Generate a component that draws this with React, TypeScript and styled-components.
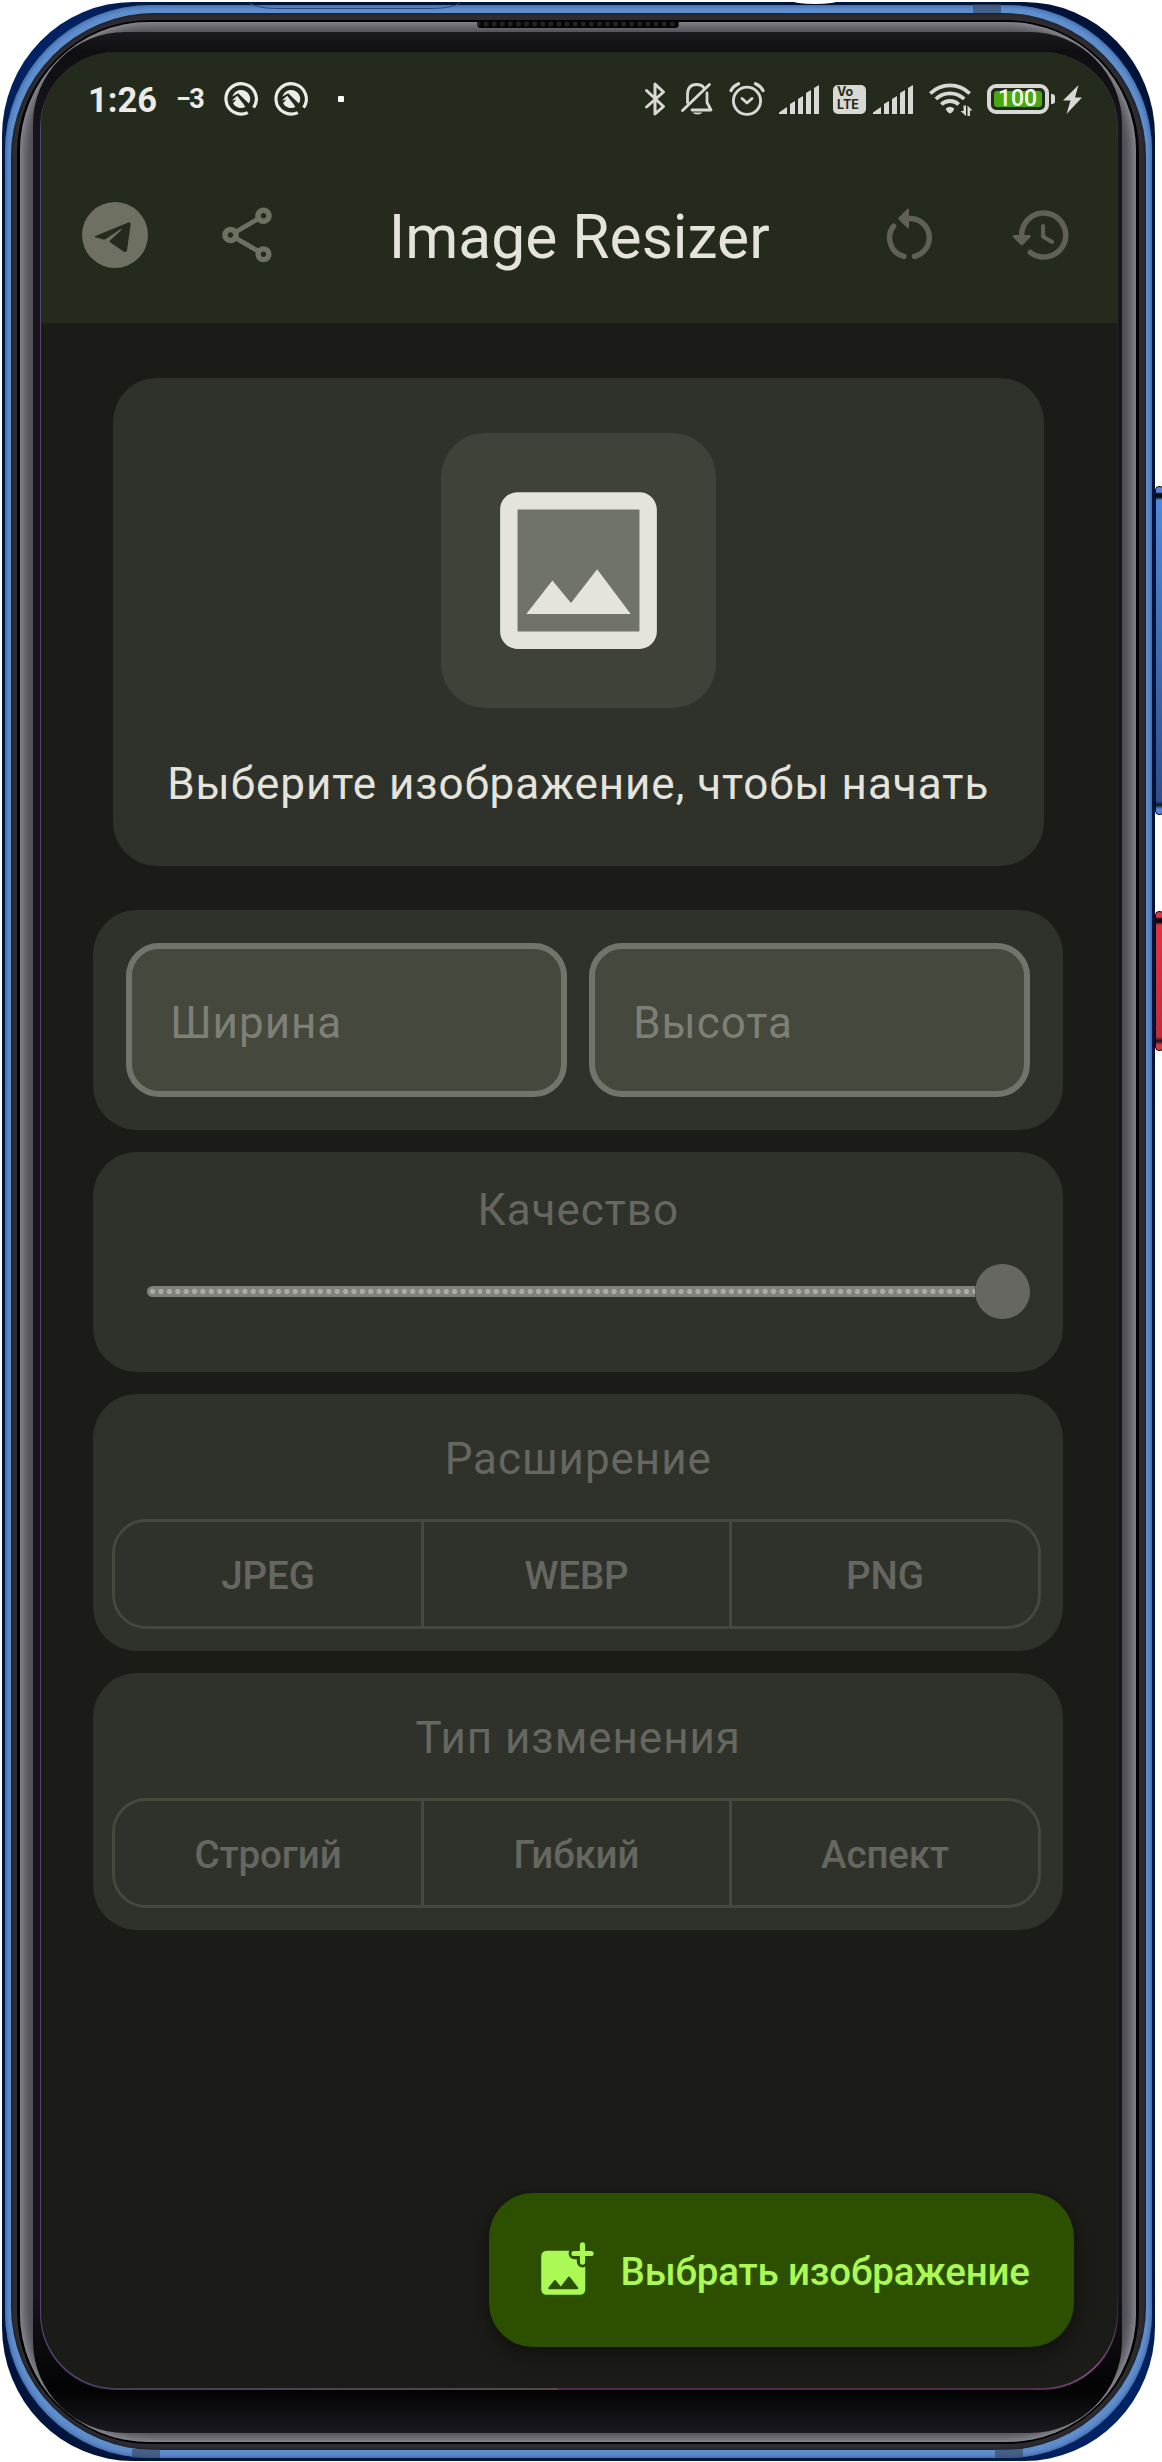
import React from "react";
import styled, { createGlobalStyle, css } from "styled-components";

const GlobalStyle = createGlobalStyle`
  html, body { margin: 0; padding: 0; background: #fff; }
  * { box-sizing: border-box; }
  body { font-family: Roboto, "Noto Sans", sans-serif; -webkit-font-smoothing: antialiased; }
`;

/* ---------- device frame ---------- */

const Stage = styled.div`
  position: relative;
  width: 1162px;
  height: 2462px;
  padding: 2px 7px 1px 2px;
  overflow: hidden;
`;

const Shell = styled.div`
  height: 100%;
  padding: 3px;
  border-radius: 131px / 134px;
  background: linear-gradient(135deg, #001235, #01256b 2%, #001235 5%, #00153f 95%, #01256b 98%, #001235);
`;

const BlueRim = styled.div`
  height: 100%;
  padding: 8px 6px 8.5px 6px;
  border-radius: 146px;
  background: #5f8ecd;
  box-shadow: inset 0 0 4px 1px #3a63a3;
`;

const DarkRim = styled.div`
  height: 100%;
  padding: 7px 7px 6px 6px;
  border-radius: 144px;
  background: #2d2c33;
  box-shadow: inset 0 0 3px #121216;
`;

const BlackLine = styled.div`
  height: 100%;
  padding: 2px 3px 1.5px 3px;
  border-radius: 133px;
  background: #020203;
`;

const SilverRim = styled.div`
  height: 100%;
  padding: 10px 14px 9px 13px;
  border-radius: 129px;
  background: #4f4e56;
  box-shadow: inset 0 0 11px 3px #98999d;
`;

const Glass = styled.div`
  height: 100%;
  padding: 20px 4.5px 43.5px 6.5px;
  border-radius: 92px;
  background: linear-gradient(#1b1a1f, #0f0f12 20px, #16151a 100px, #16151a 2260px, #030304 2358px, #1b1a20 100%);
`;

const ScreenEdge = styled.div`
  height: 100%;
  padding: 0 1px 1.5px 1.5px;
  border-radius: 76px;
  background:
    radial-gradient(circle at 1052px 26px, #2f7680, transparent 70px),
    radial-gradient(circle at 1052px 2310px, #8a4a84, transparent 70px),
    linear-gradient(90deg, #5a4276 0, #5a4276 4px, #4a3a5a 5%, #564a44 48%, #53284f 48.1%, #4c2a4a 98%, #26292c 99.6%);
`;

const Screen = styled.div`
  position: relative;
  height: 100%;
  border-radius: 75px;
  overflow: hidden;
  background: #1b1c17;
  display: flex;
  flex-direction: column;
`;

const Speaker = styled.div`
  position: absolute;
  left: 477px;
  top: 19.5px;
  width: 202px;
  height: 8px;
  border-radius: 4px;
  background: radial-gradient(circle, #222226 2.2px, transparent 2.8px) 5px 0 / 8.1px 8px, #050506;
`;

const Notch = styled.div`
  position: absolute;
  left: 792px;
  top: -3px;
  width: 46px;
  height: 7px;
  border-radius: 50%;
  background: #fff;
`;

const Antenna = styled.div<{ $x: number; $y: number }>`
  position: absolute;
  left: ${(p) => p.$x}px;
  top: ${(p) => p.$y}px;
  width: 28px;
  height: 9px;
  background: rgba(50, 66, 92, 0.6);
`;

const RimSeam = styled.svg`
  position: absolute;
  left: 249px;
  top: 2px;
`;

const SideKey = styled.div<{ $y: number; $h: number; $from: string; $to: string }>`
  position: absolute;
  left: 1155px;
  top: ${(p) => p.$y}px;
  width: 9px;
  height: ${(p) => p.$h}px;
  border: 1.5px solid #05070d;
  border-radius: 4px;
  background: linear-gradient(
    ${(p) => p.$from} 5px, #050608 7px, #050608 10px, ${(p) => p.$from} 13px,
    ${(p) => p.$to} calc(100% - 13px), #101620 calc(100% - 9px), ${(p) => p.$from} calc(100% - 5px)
  );
`;

/* ---------- top bars ---------- */

const TopArea = styled.header`
  height: 271px;
  flex: none;
  background: #252b1c;
  color: #e4e3dc;
`;

const StatusBar = styled.div`
  display: flex;
  align-items: center;
  height: 94px;
  padding-left: 47px;
`;

const Clock = styled.span`
  width: 71px;
  padding-top: 1px;
  font-size: 34.5px;
  line-height: 40px;
  font-weight: 700;
  color: #ebebe8;
`;

const Temp = styled.span`
  margin: 0 0 0 17px;
  width: 36px;
  font-size: 27px;
  line-height: 40px;
  font-weight: 700;
  letter-spacing: -1.8px;
  color: #ebebe8;
  white-space: nowrap;
`;

const Glyph = styled.svg<{ $ml?: number }>`
  flex: none;
  display: block;
  overflow: visible;
  margin-left: ${(p) => p.$ml ?? 0}px;
`;

const Dot = styled.span`
  width: 6px;
  height: 6px;
  margin-left: 30px;
  border-radius: 1px;
  background: #fff;
`;

const VoLte = styled.span`
  display: flex;
  flex-direction: column;
  justify-content: center;
  width: 33px;
  height: 29px;
  margin-left: 14px;
  padding-left: 4.5px;
  border-radius: 5px;
  background: #d8d9d5;
  color: #262b1d;
  font: 700 12.5px/12.8px Inter, sans-serif;
`;

const Battery = styled.span`
  display: flex;
  width: 62px;
  height: 30px;
  margin-left: 15px;
  padding: 3px;
  border: 4px solid #d8d9d5;
  border-radius: 9px;
`;

const BatteryFill = styled.span`
  flex: 1;
  display: flex;
  align-items: center;
  justify-content: center;
  border-radius: 3px;
  background: #4ba614;
  color: #f3fbee;
  font: 500 23px/16px Roboto, sans-serif;
`;

const BatteryTip = styled.span`
  width: 4px;
  height: 10px;
  margin-left: 2px;
  border-radius: 0 3px 3px 0;
  background: #d8d9d5;
`;

const AppBar = styled.div`
  display: flex;
  align-items: center;
  height: 177px;
  padding: 0 10px 0 8px;
`;

const IconButton = styled.span<{ $color: string }>`
  display: flex;
  align-items: center;
  justify-content: center;
  width: 132px;
  height: 132px;
  color: ${(p) => p.$color};
`;

const Title = styled.h1`
  flex: 1;
  margin: 0;
  padding: 5px 0 0 3px;
  text-align: center;
  font-size: 60.5px;
  line-height: 77px;
  font-weight: 400;
  white-space: nowrap;
`;

/* ---------- content ---------- */

const Content = styled.main`
  display: flex;
  flex-direction: column;
  align-items: center;
  gap: 22px;
  padding: 55px 54px 0 53px;
`;

const PickCard = styled.section`
  display: flex;
  flex-direction: column;
  align-items: center;
  width: 931px;
  height: 488px;
  margin-bottom: 22px;
  padding-top: 55px;
  border-radius: 44px;
  background: #2f322b;
`;

const PickIcon = styled.div`
  display: flex;
  align-items: center;
  justify-content: center;
  width: 275px;
  height: 275px;
  border-radius: 44px;
  background: #3f4238;
`;

const bodyText = css`
  font-size: 44px;
  line-height: 66px;
  letter-spacing: 0.96px;
  white-space: nowrap;
`;

const Hint = styled.p`
  ${bodyText};
  margin: 43px 0 0;
  color: #e4e3dc;
`;

const Card = styled.section<{ $h: number }>`
  display: flex;
  flex-direction: column;
  width: 970px;
  height: ${(p) => p.$h}px;
  border-radius: 44px;
  background: #2f322b;
`;

const FieldRow = styled.div`
  display: flex;
  gap: 22px;
  padding: 33px;
`;

const Field = styled.div`
  ${bodyText};
  flex: 1;
  display: flex;
  align-items: center;
  height: 154px;
  padding: 5px 0 0 38px;
  border: 6px solid #71746a;
  border-radius: 33px;
  background: #45483d;
  color: #7e8076;
`;

const CardTitle = styled.h2<{ $top: number }>`
  ${bodyText};
  margin: ${(p) => p.$top}px 0 0;
  text-align: center;
  font-weight: 400;
  color: #656760;
`;

const Slider = styled.div`
  display: flex;
  align-items: center;
  height: 55px;
  margin: 21px 33px 0 54px;
`;

const Track = styled.div`
  flex: 1;
  height: 11px;
  border-radius: 5.5px 0 0 5.5px;
  background: radial-gradient(circle, #abada5 2.3px, transparent 3px) 1.4px 0 / 8.406px 11px, #80827a;
`;

const Thumb = styled.div`
  width: 55px;
  height: 55px;
  border-radius: 50%;
  background: #666760;
`;

const Segments = styled.div`
  display: flex;
  width: 928.5px;
  height: 110px;
  margin: 27px 0 0 19px;
  border: 3px solid #45483d;
  border-radius: 34px;
`;

const Segment = styled.div`
  flex: 1;
  display: flex;
  align-items: center;
  justify-content: center;
  padding-top: 3px;
  font-size: 38.5px;
  line-height: 55px;
  font-weight: 500;
  letter-spacing: -0.1px;
  color: #656760;
  & + & {
    border-left: 3px solid #45483d;
  }
`;

const Fab = styled.button`
  display: flex;
  align-items: center;
  gap: 22px;
  align-self: flex-end;
  width: 585px;
  height: 154px;
  margin: auto 43px 41.5px 0;
  padding: 0 0 0 44px;
  border: 0;
  border-radius: 44px;
  background: #2d5000;
  color: #aaf954;
  box-shadow: 0 8px 22px rgba(0, 0, 0, 0.3), 0 2px 6px rgba(0, 0, 0, 0.2);
  font: 500 38.5px/55px Roboto, sans-serif;
  letter-spacing: -0.15px;
  white-space: nowrap;
`;

const FabLabel = styled.span`
  padding-top: 4px;
`;

/* ---------- icons ---------- */

const STATUS = "#d8d9d5";

const NoticeIcon = ({ ml }: { ml: number }) => (
  <Glyph $ml={ml} width="34" height="34" viewBox="0 0 34 34">
    <path d="M24.5 30.2A15.2 15.2 0 1 1 30 25" transform="rotate(3 17 17)" fill="none" stroke="#ebebe8" strokeWidth="3.2" />
    <path d="M8.4 14.6C9.6 10.5 13 7.9 17 7.9a9.1 9.1 0 0 1 7.9 13.7L14.2 11.2z" fill="#ebebe8" />
    <path d="M8 18.4l5.2-4.6 3.9 5.2 4.6 5.8A9.1 9.1 0 0 1 9 21.2l3.4-3.6z" fill="#ebebe8" />
    <path d="M21 22l7 7" stroke="#252b1c" strokeWidth="3" />
  </Glyph>
);

const Bluetooth = () => (
  <Glyph $ml={301} width="22" height="34" viewBox="0 0 22 34">
    <path d="M1.5 8.5l17 16L10 32V2l8.500 8L1.500 25" fill="none" stroke={STATUS} strokeWidth="3" strokeLinejoin="round" strokeLinecap="round" />
  </Glyph>
);

const BellOff = () => (
  <Glyph $ml={14} width="32" height="34" viewBox="0 0 32 34">
    <g fill="none" stroke={STATUS} strokeWidth="2.8" strokeLinecap="round">
      <path d="M6.500 20.500V13C6.500 6 10 2.500 15.500 2.500c3.500 0 6 1 7.500 3.500" />
      <path d="M26 11v9.500l4 7.500H11" strokeLinejoin="round" />
      <path d="M1.500 28.500L28.500 2.500" />
    </g>
    <path d="M11.500 30.500h10a5.500 3.600 0 0 1-10 0z" fill={STATUS} />
  </Glyph>
);

const Alarm = () => (
  <Glyph $ml={16} width="36" height="34" viewBox="0 0 36 34">
    <g fill="none" stroke={STATUS} strokeWidth="2.800" strokeLinecap="round" strokeLinejoin="round">
      <circle cx="18" cy="18.800" r="13.600" />
      <path d="M13 16.500l5 4.500 5-4.500" />
      <path d="M2 8.500c1.500-3 4-5.300 7.500-6.800M34 8.500c-1.500-3-4-5.300-7.500-6.800" strokeWidth="3.200" />
    </g>
  </Glyph>
);

const Signal = ({ ml }: { ml: number }) => (
  <Glyph $ml={ml} width="40" height="29" viewBox="0 0 40 29">
    <g fill={STATUS}>
      <path d="M0 29v-1.500L8 22v7z" />
      <path d="M11 29V19l5-3v13z" />
      <path d="M19 29V14l5-3v18z" />
      <path d="M27 29V8l5-3v24z" />
      <path d="M35 29V3l5-3v29z" />
    </g>
  </Glyph>
);

const Wifi = () => (
  <Glyph $ml={16} width="43" height="34" viewBox="0 0 43 34">
    <g fill="none" stroke={STATUS} strokeWidth="3.800">
      <path d="M1.300 11.500a28 28 0 0 1 39.400 0" />
      <path d="M6.800 17a20.500 20.500 0 0 1 28.400 0" />
      <path d="M12.300 22.500a12.500 12.500 0 0 1 17.400 0" />
    </g>
    <path d="M16.800 26.500a6.500 6.500 0 0 1 8.400 0c0 2-2.500 4.500-4.200 5-1.700-.5-4.200-3-4.200-5z" fill={STATUS} />
    <path d="M37 23.500V34l-5.500-5H34.500v-5.500zM38.500 34V23.500l5 5H41V34z" fill={STATUS} />
  </Glyph>
);

const Bolt = () => (
  <Glyph $ml={8} width="19" height="29" viewBox="0 0 19 29">
    <path d="M15.500 0L0 15.500h7.500L3.500 29 19 12.500h-7z" fill={STATUS} />
  </Glyph>
);

const Telegram = () => (
  <Glyph width="66" height="66" viewBox="0 0 24 24">
    <path
      fill="currentColor"
      fillRule="evenodd"
      d="M12 0a12 12 0 1 1 0 24a12 12 0 1 1 0-24zM4.900 12.400L16.600 7.500Q17.800 7.100 17.700 8.300L16.400 17.400Q16.200 18.600 15.100 18L10.200 14.600Q9.900 14.300 10.200 14L14.300 10.200Q14.500 9.700 13.900 9.900L8.900 13.300Q8.400 13.700 7.800 13.600L5 12.900Q4.300 12.700 4.900 12.400z"
    />
  </Glyph>
);

const Share = () => (
  <Glyph width="66" height="66" viewBox="0 0 24 24">
    <path
      fill="currentColor"
      d="M18 16.080c-.76 0-1.440.3-1.960.77L8.910 12.700c.05-.23.09-.46.09-.7s-.04-.47-.09-.7l7.050-4.110c.54.5 1.250.81 2.040.81 1.660 0 3-1.340 3-3s-1.340-3-3-3-3 1.340-3 3c0 .24.04.47.09.7L8.040 9.810C7.500 9.310 6.790 9 6 9c-1.660 0-3 1.340-3 3s1.340 3 3 3c.79 0 1.500-.31 2.040-.81l7.120 4.160c-.05.21-.08.43-.08.65 0 1.610 1.310 2.920 2.920 2.920s2.920-1.310 2.920-2.920-1.310-2.920-2.920-2.920zM18 4c.55 0 1 .45 1 1s-.45 1-1 1-1-.45-1-1 .45-1 1-1zM6 13c-.55 0-1-.45-1-1s.45-1 1-1 1 .45 1 1-.45 1-1 1zm12 7.020c-.55 0-1-.45-1-1s.45-1 1-1 1 .45 1 1-.45 1-1 1z"
    />
  </Glyph>
);

const Restart = () => (
  <Glyph width="66" height="66" viewBox="0 0 24 24">
    <g fill="none" stroke="currentColor" strokeWidth="2" strokeLinecap="round">
      <path d="M6.400 8.800A7 7 0 0 0 10.100 19.800" />
      <path d="M12 6A7 7 0 0 1 14 19.800" />
    </g>
    <path d="M8.250 5.650L11.300 2.600Q12 2.100 12 2.900V9.100Q12 9.900 11.300 9.400L8.250 6.350Q7.900 6 8.250 5.650z" fill="currentColor" />
  </Glyph>
);

const History = () => (
  <Glyph width="66" height="66" viewBox="0 0 24 24">
    <path
      fill="currentColor"
      d="M13.260 3C8.170 2.860 4 6.950 4 12H2.210c-.45 0-.67.54-.35.85l2.790 2.800c.2.2.51.2.71 0l2.790-2.800c.31-.31.09-.85-.36-.85H6c0-3.900 3.180-7.050 7.100-7 3.720.05 6.850 3.180 6.900 6.900.05 3.910-3.100 7.100-7 7.100-1.610 0-3.100-.55-4.280-1.480-.4-.31-.96-.28-1.320.08-.42.42-.39 1.130.08 1.490C9 20.290 10.910 21 13 21c5.050 0 9.140-4.170 9-9.260-.13-4.690-4.050-8.610-8.740-8.740zm-.51 5c-.41 0-.75.34-.75.75v3.680c0 .35.19.68.49.86l3.120 1.850c.36.21.82.09 1.030-.26.21-.36.09-.82-.26-1.030l-2.880-1.710v-3.400c0-.4-.34-.74-.75-.74z"
    />
  </Glyph>
);

const ImageIcon = () => (
  <Glyph width="209" height="209" viewBox="0 0 24 24">
    <rect x="4" y="4" width="16" height="16" fill="#70736a" />
    <path
      fill="#e4e3dc"
      d="M19 5v14H5V5h14m0-2H5c-1.100 0-2 .9-2 2v14c0 1.100.9 2 2 2h14c1.100 0 2-.9 2-2V5c0-1.100-.9-2-2-2zm-4.860 8.860l-3 3.870L9 13.140 6 17h12l-3.860-5.140z"
    />
  </Glyph>
);

const AddPhoto = () => (
  <Glyph width="66" height="66" viewBox="0 0 24 24">
    <rect x="3" y="5" width="16" height="16" rx="1.900" fill="currentColor" />
    <path d="M18 3v6M15 6h6" stroke="#2d5000" strokeWidth="4.100" strokeLinecap="round" />
    <path d="M18 2.900v6.200M14.900 6h6.200" stroke="currentColor" strokeWidth="1.900" strokeLinecap="round" />
    <path d="M5.700 18.300L7.600 15.900Q8 15.400 8.400 15.900L10.100 18L12.700 14.600Q13.100 14.200 13.500 14.600L16.300 18.300Q16.700 18.950 16 19H6Q5.300 18.950 5.700 18.300z" fill="#2d5000" />
  </Glyph>
);

const groups = [
  { title: "Расширение", items: ["JPEG", "WEBP", "PNG"] },
  { title: "Тип изменения", items: ["Строгий", "Гибкий", "Аспект"] },
];

export default function App() {
  return (
    <Stage>
      <GlobalStyle />
      <SideKey $y={486} $h={329} $from="#5286dc" $to="#2f4f88" />
      <SideKey $y={911} $h={140} $from="#dd3440" $to="#bd2e35" />
      <Shell>
        <BlueRim>
          <DarkRim>
            <BlackLine>
              <SilverRim>
                <Glass>
                  <ScreenEdge>
                    <Screen>
                      <TopArea>
                        <StatusBar>
                          <Clock>1:26</Clock>
                          <Temp>−3</Temp>
                          <NoticeIcon ml={12} />
                          <NoticeIcon ml={16} />
                          <Dot />
                          <Bluetooth />
                          <BellOff />
                          <Alarm />
                          <Signal ml={13.5} />
                          <VoLte>
                            <span>Vo</span>
                            <span>LTE</span>
                          </VoLte>
                          <Signal ml={7} />
                          <Wifi />
                          <Battery>
                            <BatteryFill>100</BatteryFill>
                          </Battery>
                          <BatteryTip />
                          <Bolt />
                        </StatusBar>
                        <AppBar>
                          <IconButton $color="#6e7162"><Telegram /></IconButton>
                          <IconButton $color="#6e7162"><Share /></IconButton>
                          <Title>Image Resizer</Title>
                          <IconButton $color="#5f6253"><Restart /></IconButton>
                          <IconButton $color="#5f6253"><History /></IconButton>
                        </AppBar>
                      </TopArea>
                      <Content>
                        <PickCard>
                          <PickIcon><ImageIcon /></PickIcon>
                          <Hint>Выберите изображение, чтобы начать</Hint>
                        </PickCard>
                        <Card $h={220}>
                          <FieldRow>
                            <Field>Ширина</Field>
                            <Field>Высота</Field>
                          </FieldRow>
                        </Card>
                        <Card $h={220}>
                          <CardTitle $top={25}>Качество</CardTitle>
                          <Slider>
                            <Track />
                            <Thumb />
                          </Slider>
                        </Card>
                        {groups.map((g) => (
                          <Card $h={257} key={g.title}>
                            <CardTitle $top={32}>{g.title}</CardTitle>
                            <Segments>
                              {g.items.map((item) => (
                                <Segment key={item}>{item}</Segment>
                              ))}
                            </Segments>
                          </Card>
                        ))}
                      </Content>
                      <Fab>
                        <AddPhoto />
                        <FabLabel>Выбрать изображение</FabLabel>
                      </Fab>
                    </Screen>
                  </ScreenEdge>
                </Glass>
              </SilverRim>
            </BlackLine>
          </DarkRim>
        </BlueRim>
      </Shell>
      <Speaker />
      <Notch />
      <RimSeam width="212" height="10" viewBox="0 0 212 10">
        <path d="M0 1C8 5 16 6.500 30 6.500H180C195 6.500 204 5 211 1" fill="none" stroke="#2b4a80" strokeWidth="1" />
      </RimSeam>
      <Antenna $x={973} $y={4} />
      <Antenna $x={132} $y={2449} />
      <Antenna $x={995} $y={2449} />
    </Stage>
  );
}
